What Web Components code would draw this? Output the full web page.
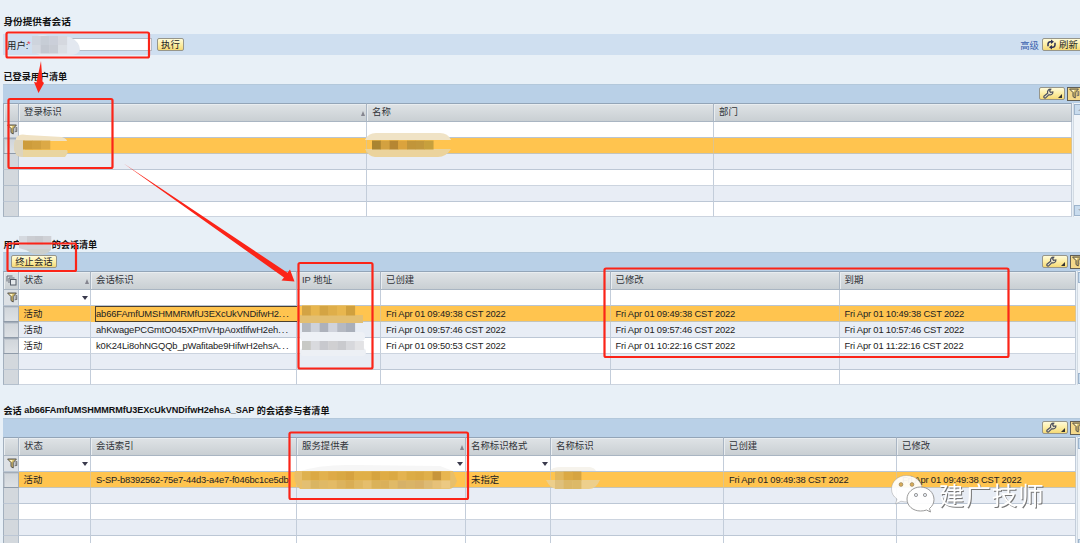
<!DOCTYPE html>
<html lang="zh-CN">
<head>
<meta charset="utf-8">
<title>身份提供者会话</title>
<style>
html,body{margin:0;height:100%;overflow:hidden;background:#e8f0f7}
body{font-family:"Liberation Sans","Noto Sans CJK SC",sans-serif;font-size:9.4px;color:#222}
</style>
</head>
<body>
<session-app></session-app>
<script>
const define = (name, html, setup) => customElements.define(name, class extends HTMLElement {
  connectedCallback() {
    if (this.shadowRoot) return;
    const t = document.createElement('template');
    t.innerHTML = typeof html === 'function' ? html(this) : html;
    this.attachShadow({mode: 'open'}).append(t.content.cloneNode(true));
    if (setup) setup(this);
  }
});

const ICONS = {
  filter: '<svg width="11" height="11" viewBox="0 0 11 11"><path d="M.6 1h8.8L6.2 4.600V10L4 8.600V4.600Z" fill="#d9c06a" stroke="#55534f" stroke-width="1"/><path d="M2.300 2h3.200L4.800 4Z" fill="#fff7cf"/><path d="M7.500 4.200l2.600-.6M7.600 6h2.200M7.500 7.800l2.400-.4M9.800 3.600v4" stroke="#666" stroke-width=".9" fill="none"/></svg>',
  wrench: '<svg width="11" height="11" viewBox="0 0 11 11"><path d="M1.200 9.800a1.200 1.200 0 0 1 0-1.800L4.600 5.200C4 3 5.400 1 7.800 1.200L6.600 2.900l1 1.500 2.300-.5C10 6.200 8 7.300 6 6.700L2.900 9.700a1.200 1.200 0 0 1-1.700.1Z" fill="#e9e2c4" stroke="#4d515e" stroke-width="1.150"/></svg>',
  refresh: '<svg width="11" height="11" viewBox="0 0 11 11"><path d="M2 7.200V5a2.500 2.500 0 0 1 2.500-2.300h1.200M9 3.800V6a2.500 2.500 0 0 1-2.500 2.300H5.300" fill="none" stroke="#2d3155" stroke-width="1.500"/><path d="M5 .5l3 2.200-3 2.200ZM6 6.100L3 8.300l3 2.200Z" fill="#2d3155"/></svg>',
  copy: '<svg width="11" height="11" viewBox="0 0 11 11"><path d="M1 6.500V1h5.500M3 8V3h5.500" fill="none" stroke="#666d78"/><rect x="4.500" y="4.500" width="5.500" height="5.500" fill="#e5e9ec" stroke="#555c68"/></svg>'
};

define('ui-icon', el => `<style>:host{display:inline-flex;flex:none}svg{display:block}</style>${ICONS[el.getAttribute('name')]}`);

define('ui-title', `<style>
:host{display:flex;align-items:center;height:16px;padding-left:3.5px;font-weight:700;font-size:9.1px;color:#111;white-space:pre}
:host(.a){font-size:9.65px}
</style><slot></slot>`);

define('ui-button', `<style>
:host{display:inline-flex;box-sizing:border-box;align-items:center;justify-content:center;height:13px;border:1px solid #97968a;border-radius:2px;background:linear-gradient(#fffbd9,#fdeea5 50%,#f5d976);color:#222;white-space:nowrap;flex:none;line-height:11px}
:host([pressed]){border:1.500px solid #625f55;border-right:0;border-radius:0;background:#f4d98a;height:14px}
</style><slot></slot>`);

define('ui-tools', `<style>
:host{display:flex;gap:2px;align-items:center}
.w{width:26px}.f{width:16px;justify-content:flex-start;padding-left:1px}
.c{width:0;height:0;border-left:4px solid transparent;border-bottom:4px solid #333;margin:5px 0 0 4px}
</style><ui-button class="w"><ui-icon name="wrench"></ui-icon><i class="c"></i></ui-button><ui-button pressed class="f"><ui-icon name="filter"></ui-icon></ui-button>`);

define('search-bar', `<style>
:host{display:flex;align-items:center;box-sizing:border-box;height:21px;margin-left:3px;padding-left:4px;background:#cfdff0}
label{width:20px;white-space:nowrap}b{color:#e3455b;font-weight:400;width:5px;margin-top:-2px}
.in{box-sizing:border-box;width:120px;height:13px;border:1px solid #b3bcc6;background:#fff;margin-right:5px}
a{margin-left:auto;color:#3a5fae;margin-right:3px}
.go{width:27px}.re{width:50px;margin-right:-12px;justify-content:flex-start;padding-left:3px;gap:2px}
</style><label>用户:</label><b>*</b><div class="in"></div><ui-button class="go">执行</ui-button><a>高级</a><ui-button class="re"><ui-icon name="refresh"></ui-icon>刷新</ui-button>`);

define('ui-scroll', `<style>
:host{display:flex;flex-direction:column;justify-content:space-between;width:16px;flex:none;background:#f1f5f9;border-left:1px solid #d3dbe3;box-sizing:border-box;padding:1px 0}
i{display:flex;box-sizing:border-box;width:15px;height:11px;border:1px solid #9db4cc;background:#c9dcee;align-items:center;padding-left:3px}
i::before{content:"";border:3px solid transparent;border-top:0;border-bottom:3px solid #a9aeb4}
i.d::before{border-bottom:0;border-top:3px solid #a9aeb4}
</style><i></i><i class="d"></i>`);

const TABLES = {
  users: {cols: [348, 347, 358],
    head: ['登录标识|s', '名称', '部门'], filter: ['', '', ''],
    rows: [['', '', '']], count: 5, corner: ''},
  sessions: {cols: [72, 206, 84, 229.5, 229, 236.5],
    head: ['状态|s', '会话标识', 'IP 地址', '已创建', '已修改', '到期'], filter: ['v', '', '', '', '', ''],
    rows: [
      ['活动', '!ab66FAmfUMSHMMRMfU3EXcUkVNDifwH2<u>...</u>', '', 'Fri Apr 01 09:49:38 CST 2022', 'Fri Apr 01 09:49:38 CST 2022', 'Fri Apr 01 10:49:38 CST 2022'],
      ['活动', 'ahKwagePCGmtO045XPmVHpAoxtfifwH2eh<u>...</u>', '', 'Fri Apr 01 09:57:46 CST 2022', 'Fri Apr 01 09:57:46 CST 2022', 'Fri Apr 01 10:57:46 CST 2022'],
      ['活动', 'k0K24Li8ohNGQQb_pWafitabe9HifwH2ehsA<u>...</u>', '', 'Fri Apr 01 09:50:53 CST 2022', 'Fri Apr 01 10:22:16 CST 2022', 'Fri Apr 01 11:22:16 CST 2022']],
    count: 5, corner: '<ui-icon name="copy"></ui-icon>'},
  members: {cols: [72, 206, 169, 85, 173, 173, 179],
    head: ['状态', '会话索引', '服务提供者|s', '名称标识格式', '名称标识', '已创建', '已修改'], filter: ['v', '', 'v', 'v', '', '', ''],
    rows: [['活动', 'S-SP-b8392562-75e7-44d3-a4e7-f046bc1ce5db', '', '未指定', '', 'Fri Apr 01 09:49:38 CST 2022', 'Fri Apr 01 09:49:38 CST 2022']],
    count: 5, corner: ''}
};

define('data-table', el => {
  const t = TABLES[el.getAttribute('kind')];
  const grid = '16px ' + t.cols.map(c => c + 'px').join(' ');
  const row = (cls, first, cells) => `<div class="r ${cls}"><div class="c sel">${first}</div>${cells.join('')}</div>`;
  let out = row('h', t.corner, t.head.map(h => {
    const [n, s] = h.split('|');
    return `<div class="c"><span>${n}</span>${s ? '<i class="sort"></i>' : ''}</div>`;
  }));
  out += row('f', '<ui-icon name="filter"></ui-icon>', t.filter.map(f => `<div class="c">${f ? '<i class="dd"></i>' : ''}</div>`));
  for (let i = 0; i < t.count; i++) {
    const d = t.rows[i];
    out += row((i === 0 ? 'on' : i % 2 ? 'alt' : '') + (d ? ' data' : ''), '', t.cols.map((_, k) => {
      const v = d ? d[k] : '', focus = v[0] === '!';
      const ls = v.startsWith('Fri') ? ' fri' : v.startsWith('S-') ? ' sp' : k === 1 && v ? ' id' : '';
      return `<div class="c${focus ? ' focus' : ''}${ls}"><span>${focus ? v.slice(1) : v}</span></div>`;
    }));
  }
  return `<style>
  :host{display:block;margin-left:3px}
  .bar{box-sizing:border-box;height:19px;background:#b9d0e7;border-top:1px solid #b3c8db;display:flex;align-items:center;padding-left:8px}
  .bar ui-tools{margin:-1px -6px 0 auto}
  ::slotted(ui-button){margin-top:-2px}
  :host([kind=users]) .bar ui-tools{margin-right:-3px}
  .body{display:flex}
  .grid{flex:none;box-sizing:border-box;border-left:1px solid #a9b7c6;margin-right:1px}
  .r{display:grid;grid-template-columns:${grid};margin-left:-1px;height:16px;background:#fff}
  .r:last-child{height:15px}
  .c{box-sizing:border-box;display:flex;align-items:center;padding-left:5px;border-right:1px solid #c3cdda;border-bottom:1px solid #ccd4df;overflow:hidden;white-space:nowrap;min-width:0}
  .c span{flex:none;line-height:14px}
  .on .c:not(.sel):nth-child(2),.data .c:nth-child(2){padding-left:4.500px}
  .sel{background:#d3d8dd;border-color:#b3bfcc;border-left:1px solid #a3b0be;padding:0;justify-content:center}
  .h{height:19px;color:#303338}
  .h .c{background:linear-gradient(#dfe3e6,#c9cfd3);border-top:1px solid #93a5b8;border-bottom-color:#a9b5c2;border-right-color:#a9b5c3;box-shadow:inset 1px 1px #e9edf0;padding-bottom:1px}
  .f .c{border-bottom-color:#b9c5d3}
  .f .sel{background:#dde1e5;padding-left:3px}
  .alt{background:#e8edf5}
  .alt .c{border-bottom-color:#bcc7d5}
  .on{background:#ffc44f}
  .on .c{border-bottom-color:#c3c4bb;border-right-color:#dfc48b}
  .data .sel{background:linear-gradient(#d0d5da,#dde1e5);border:1px solid #a3adb9;border-bottom-color:#8f9ba9;box-shadow:inset 1px 1px #c1c8d0}
  .sort{margin:3px 1px 0 auto;border:2.500px solid transparent;border-top:0;border-bottom:5px solid #85858f;width:0}
  .dd{margin:1px 2px 0 auto;border:3.500px solid transparent;border-bottom:0;border-top:4px solid #3a3a4c;width:0}
  .fri{letter-spacing:-.17px}
  .id{letter-spacing:-.13px}
  .sp{letter-spacing:-.2px}
  u{text-decoration:none;letter-spacing:1.100px}
  .grid .focus{margin-left:4px;border:1.500px solid #4b4030;border-right:0;padding-left:0;border-bottom:1px solid #4b4030}
  </style>
  <div class="bar"><slot></slot><ui-tools></ui-tools></div>
  <div class="body"><div class="grid">${out}</div><ui-scroll></ui-scroll></div>`;
});

/* Blurred-out values: soft blobs with colour blocks */
const mosaic = (x, y, w, h, cols) => cols.map((c, i) => `<rect x="${x + i * w}" y="${y}" width="${w + .3}" height="${h}" fill="${c}"/>`).join('');

define('page-notes', `<style>
:host{position:absolute;inset:0;pointer-events:none}
svg{display:block}
.wm{font:25.500px "Noto Sans CJK SC",sans-serif;filter:drop-shadow(1px 1px 0 #777)}
</style><svg width="1080" height="543" viewBox="0 0 1080 543">
<path d="M32 40Q38 33 48 36L70 37Q80 42 80 50Q78 55 70 55H40Q31 52 32 40Z" fill="#e3e8f0"/>
${mosaic(32, 36, 8.700, 9, ['#ced4dd', '#c7cdd6', '#cbcfd9', '#d5d8df'])}${mosaic(32, 45, 8.700, 8.500, ['#d4d9e1', '#c3c8d1', '#c8ccd4', '#dbdfe5'])}
<path d="M16 138Q19 133 27 135L62 137Q67 139 67 141H16Z" fill="#f0e2c4"/><path d="M15 140H25V150H67Q69 152 65 157H23Q14 157 14 147Z" fill="#e9d5a0"/><path d="M15 140H23V157Q14 156 14 147Z" fill="#ddd4bd"/>
${mosaic(23, 140.500, 9, 9, ['#cd9c3b', '#d1a03f', '#dca946'])}
<path d="M365 140Q368 133 376 133H440Q448 133 451 140Z" fill="#f0e3c6"/><path d="M365 149H451Q446 157 438 157H375Q368 156 365 149Z" fill="#ebd39c"/>
${mosaic(372, 140.500, 8.750, 9, ['#aa8430', '#d3a140', '#b68632', '#dba33d', '#c1953a', '#c1973c', '#c7a03d'])}
<path d="M19 236H51V250Q44 257 35 253L19 248Z" fill="#d1d3d8"/>${mosaic(19, 236, 8, 9, ['#d5d9df', '#cbcdd2', '#c8cacf', '#cfd1d6'])}<path d="M26 249H51Q47 256 38 254Q31 255 26 249Z" fill="#ccd0cd"/>
<path d="M302 305H355V315H363V323H300V315H302Z" fill="#e3bf72"/>
${mosaic(302, 306, 8.800, 9.500, ['#d3a344', '#e8b64e', '#d4a443', '#dfae49', '#e8b64e', '#d0a03e'])}
${mosaic(302, 323, 8.800, 9, ['#b3b7be', '#ced2da', '#adb1bb', '#d0d3dc', '#b5b9c2', '#a9afba'])}
<rect x="300" y="332" width="65" height="9" rx="4" fill="#eef1f6"/><rect x="300" y="348" width="66" height="8" rx="4" fill="#edf0f5"/>
${mosaic(302, 341, 8.800, 9, ['#c8c9c5', '#d9dade', '#c8c9ce', '#d0d0d2', '#c9cace', '#d7d8dc', '#e3e3e5'])}
<path d="M297 472Q320 464 355 465L440 466L453 471H297Z" fill="#f6f6f6"/><path d="M295 471H453L457 481Q454 489 449 489H300Q292 482 295 471Z" fill="#e8bf69"/>
${mosaic(302, 471.500, 8.700, 9, ['#deb14f', '#dba944', '#e2b14d', '#deaa47', '#d9a843', '#d6a23f', '#e0af48', '#e0af48', '#d6a43e', '#dfac45', '#dba943', '#e4b350', '#dcac46', '#daa944', '#e0b04a', '#c7953b', '#e8b650'])}
${mosaic(302, 480.500, 8.700, 8, ['#e3bf72', '#d9b563', '#dfb967', '#e3bb66', '#dcb35e', '#d9ad55', '#dfb762', '#e5be6d', '#dab259', '#dab05a', '#e0ba68', '#d6b168', '#d9b468', '#d8b067', '#ddba74', '#e6c179', '#ecc983'])}
<path d="M550 471Q552 467 561 467H590Q595 468 596 471Z" fill="#f6f3ec"/><path d="M546 480H600Q596 489 589 489H556Q550 488 546 480Z" fill="#edcf8c"/>
${mosaic(555, 471.500, 8.700, 9, ['#e2b75c', '#dba944', '#d6a440'])}${mosaic(555, 480, 8.700, 9, ['#dfc07c', '#dbb767', '#dcb968'])}

<g fill="none" stroke="#fb2418" stroke-width="2.200">
<rect x="6.500" y="32.500" width="142.500" height="25" rx="1.500"/>
<rect x="8.500" y="99" width="104" height="69" rx="1.500"/>
<rect x="7.500" y="243.500" width="68.500" height="27.500" rx="1.500"/>
<rect x="298.500" y="263" width="74" height="105.500" rx="1.500"/>
<rect x="604.500" y="268.500" width="404" height="88.500" rx="1.500"/>
<rect x="289.500" y="432.500" width="178.500" height="66.500" rx="1.500"/></g>
<g fill="#fb2418"><path d="M41 61L42.500 81.500L44 83L38.500 93L34 82L36.500 82.500Z"/><path d="M123.300 163.200L287.500 272.800L290 269.500L294.500 281.500L281.500 280.500L284 277.500Z"/></g>

<g stroke="#8f8f8f" stroke-width=".9" fill="#fff" fill-opacity=".92">
<path d="M906.500 475.500C898 475.500 891.500 481.500 891.500 489C891.500 493.500 893.500 496.500 897 499L895.500 504L901 501.200Q904 502 908 502L922 488C921 480.500 914.500 475.500 906.500 475.500Z" stroke-opacity=".45"/>
<path d="M920.500 487C913 487 907 492.500 907 499C907 506 913 511 920.500 511Q924 511 926.500 510L930.500 512L929.500 508.500C932.500 506 934 503 934 499.500C934 492.500 928 487 920.500 487Z"/></g>
<g fill="#d9ac58" stroke="#776a50" stroke-width=".5"><circle cx="901" cy="484.500" r="1.900"/><circle cx="912" cy="484.500" r="1.900"/></g>
<g fill="#e8edf5" stroke="#777" stroke-width=".7"><circle cx="916" cy="495" r="1.600"/><circle cx="925" cy="495" r="1.600"/></g>
<text class="wm" x="938.700" y="504.800" fill="#fff" textLength="105">建广技师</text>
</svg>`);

define('session-app', `<style>
:host{display:block;position:relative;width:1080px;height:543px;overflow:hidden}
main{display:flex;flex-direction:column}
.a{margin-top:13px}.bar{margin-top:5px}
.t1{margin-top:13px}.t2{margin-top:19px}.t3{margin-top:17px}
.gap{display:inline-block;width:30px}
.end{width:46px}
.tl{letter-spacing:-.06px}
</style><main>
<ui-title class="a">身份提供者会话</ui-title>
<search-bar class="bar"></search-bar>
<ui-title class="t1">已登录用户清单</ui-title>
<data-table kind="users"></data-table>
<ui-title class="t2">用户<span class="gap"></span>的会话清单</ui-title>
<data-table kind="sessions"><ui-button class="end">终止会话</ui-button></data-table>
<ui-title class="t3">会话 <span class="tl">ab66FAmfUMSHMMRMfU3EXcUkVNDifwH2ehsA_SAP</span> 的会话参与者清单</ui-title>
<data-table kind="members"></data-table>
</main><page-notes></page-notes>`);
</script>
</body>
</html>
